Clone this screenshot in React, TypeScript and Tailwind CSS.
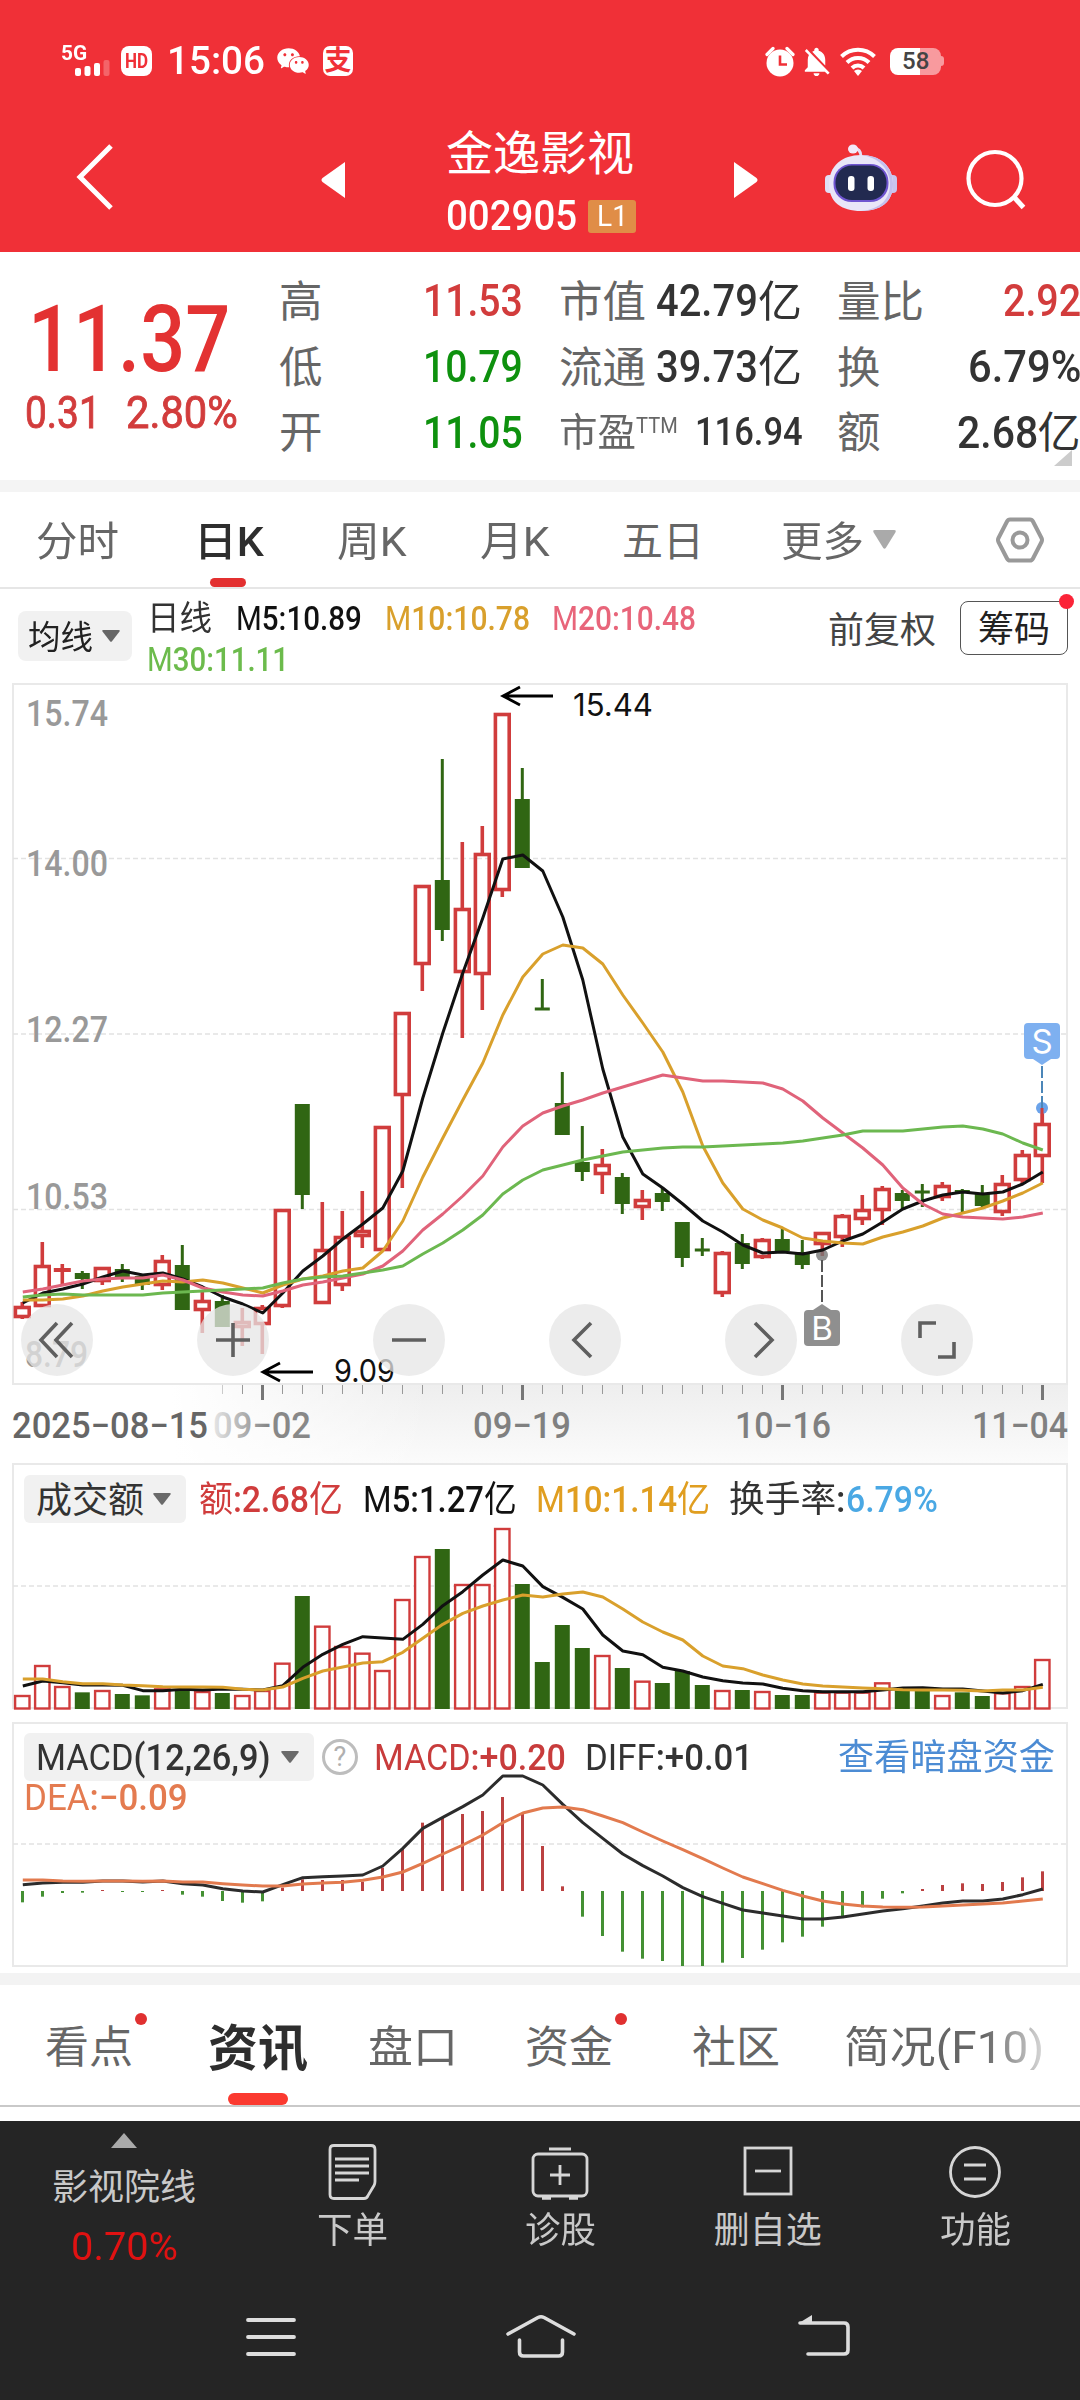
import { useLayoutEffect, useRef, useState, type ReactNode } from "react";
import { AiFillWechat } from "react-icons/ai";
import { MdNotificationsOff } from "react-icons/md";

const FONT = "Roboto, 'Noto Sans CJK SC', sans-serif";

/** One line of text, condensed or widened to fill the width of its box. */
function Fit({ className = "", children }: { className?: string; children: ReactNode }) {
  const box = useRef<HTMLSpanElement>(null);
  const text = useRef<HTMLSpanElement>(null);
  const [scale, setScale] = useState(1);
  useLayoutEffect(() => {
    if (box.current && text.current) setScale(box.current.clientWidth / text.current.offsetWidth);
  }, []);
  return (
    <span ref={box} className={`block shrink-0 whitespace-nowrap leading-none ${className}`}>
      <span ref={text} className="inline-block origin-left" style={{ transform: `scaleX(${scale})` }}>
        {children}
      </span>
    </span>
  );
}

/* ---------- chart data: one entry per trading day ---------- */

const STEP = 20;
const FIRST = 22.3;
const cx = (i: number) => FIRST + STEP * i;

// [rising, body top, body bottom, wick top, wick bottom]
type Candle = [number, number, number, number, number];
const candles: Candle[] = [
  [1, 1306, 1318, 1302, 1319], [1, 1265, 1307, 1242, 1307], [1, 1268.5, 1271.5, 1264, 1285], [0, 1273, 1279, 1271, 1289],
  [1, 1267, 1282, 1267, 1285], [0, 1269, 1279, 1264, 1282], [0, 1276, 1285, 1276, 1290], [1, 1260, 1286, 1255, 1290],
  [0, 1265, 1310, 1245, 1310], [1, 1300, 1311, 1290, 1333], [0, 1301, 1327, 1295, 1327], [1, 1321, 1328, 1308, 1346],
  [1, 1307, 1325, 1305, 1354], [1, 1209, 1307, 1209, 1308], [0, 1104, 1195, 1104, 1209], [1, 1249, 1304, 1202, 1304],
  [1, 1236, 1286, 1211, 1291], [1, 1230, 1237, 1191, 1248], [1, 1126, 1251, 1126, 1251], [1, 1012, 1096, 1012, 1188],
  [1, 885, 965, 885, 991], [0, 880, 930, 759, 941], [1, 908, 973, 842, 1038], [1, 853, 975, 826, 1010],
  [1, 713, 891, 713, 897], [0, 799, 868, 768, 868], [0, 1007.5, 1010.5, 979, 1010], [0, 1103, 1135, 1072, 1135],
  [0, 1162, 1172, 1126, 1181], [1, 1164, 1175, 1149, 1194], [0, 1177, 1204, 1173, 1214], [1, 1199, 1208, 1190, 1220],
  [0, 1193, 1202, 1188, 1211], [0, 1222, 1258, 1222, 1267], [0, 1248.5, 1251.5, 1238, 1256], [1, 1252, 1294, 1251, 1297],
  [0, 1243, 1264, 1234, 1269], [1, 1239, 1258, 1238, 1259], [0, 1239, 1251, 1227, 1251], [0, 1252, 1265, 1240, 1269],
  [1, 1232, 1245, 1232, 1256], [1, 1215, 1238, 1214, 1247], [1, 1209, 1220, 1195, 1225], [1, 1188, 1211, 1186, 1225],
  [0, 1193, 1201, 1190, 1209], [0, 1190.5, 1193.5, 1184, 1207], [1, 1185, 1198, 1182, 1201], [0, 1190, 1192.5, 1189, 1212],
  [0, 1194, 1206, 1185, 1208], [1, 1183, 1213, 1175, 1216], [1, 1154, 1181, 1150, 1184], [1, 1123, 1157, 1108, 1183],
];

const ma5 = [1303, 1293, 1289, 1284, 1277, 1271, 1275, 1273, 1279, 1287, 1297, 1304, 1313, 1293, 1271, 1256, 1239, 1224, 1208, 1171, 1098, 1033, 973, 918, 859, 855, 871, 917, 980, 1069, 1137, 1174, 1188, 1204, 1221, 1232, 1245, 1253, 1252, 1254, 1250, 1241, 1234, 1222, 1209, 1201, 1195, 1192, 1194, 1192, 1184, 1172];
const ma10 = [1300, 1300, 1299, 1296, 1291, 1287, 1284, 1281, 1282, 1280, 1283, 1288, 1293, 1285, 1279, 1276, 1271, 1268, 1251, 1221, 1177, 1138, 1100, 1063, 1015, 977, 954, 945, 948, 964, 995, 1023, 1052, 1092, 1146, 1183, 1209, 1220, 1228, 1238, 1241, 1243, 1244, 1237, 1232, 1226, 1218, 1213, 1208, 1201, 1193, 1183];
const ma20 = [1292, 1289, 1285, 1281, 1279, 1278, 1278, 1275, 1280, 1288, 1292, 1295, 1296, 1291, 1285, 1282, 1278, 1274, 1266, 1251, 1230, 1214, 1196, 1176, 1147, 1126, 1113, 1106, 1100, 1093, 1087, 1081, 1075, 1078, 1081, 1081, 1082, 1083, 1089, 1101, 1118, 1133, 1148, 1165, 1188, 1204, 1214, 1217, 1218, 1219, 1217, 1213];
const ma30 = [1297, 1295, 1294, 1295, 1295, 1295, 1295, 1293, 1292, 1291, 1290, 1289, 1288, 1283, 1279, 1277, 1276, 1273, 1270, 1266, 1254, 1243, 1230, 1215, 1194, 1180, 1170, 1165, 1160, 1156, 1152, 1150, 1148, 1147, 1147, 1146, 1145, 1144, 1143, 1141, 1138, 1135, 1131, 1131, 1131, 1129, 1127, 1126, 1129, 1134, 1143, 1150];

// Turnover panel, in thirds of a pixel from y = 1460
const volume = [705, 615, 678, 697, 690, 702, 706, 685, 690, 693, 699, 705, 690, 608, 408, 497, 558, 578, 630, 417, 288, 267, 372, 372, 204, 372, 606, 495, 564, 585, 624, 662, 669, 633, 675, 690, 690, 693, 705, 705, 695, 695, 695, 667, 690, 690, 705, 697, 708, 697, 678, 597];
const vol5 = [678, 663, 668, 675, 675, 676, 692, 692, 688, 690, 687, 688, 690, 677, 622, 583, 553, 530, 534, 538, 493, 437, 395, 345, 300, 318, 380, 412, 447, 525, 573, 584, 622, 633, 651, 662, 669, 672, 685, 692, 695, 695, 695, 690, 684, 683, 687, 687, 693, 699, 692, 673];
const vol10 = [657, 657, 665, 671, 671, 675, 677, 680, 681, 681, 682, 688, 690, 681, 655, 633, 621, 609, 605, 577, 535, 493, 460, 438, 420, 405, 411, 402, 396, 411, 447, 486, 516, 540, 588, 618, 626, 645, 660, 672, 678, 681, 684, 686, 689, 690, 690, 691, 693, 690, 690, 682];

// MACD panel, in thirds of a pixel from y = 1710; the zero line is at 543
const macd = [577, 560, 549, 548, 540, 546, 546, 540, 554, 560, 573, 578, 574, 533, 508, 510, 510, 515, 473, 417, 338, 322, 312, 303, 261, 312, 408, 529, 620, 678, 725, 746, 753, 768, 768, 758, 744, 719, 697, 680, 650, 618, 592, 566, 550, 537, 525, 520, 522, 516, 502, 484];
const diff = [524, 519, 517, 517, 513, 513, 516, 513, 521, 525, 536, 543, 546, 524, 503, 500, 498, 495, 468, 415, 355, 322, 290, 255, 198, 198, 225, 283, 338, 385, 432, 467, 498, 533, 560, 580, 600, 609, 618, 627, 627, 621, 612, 603, 596, 588, 579, 573, 573, 567, 554, 537];
const dea = [510, 510, 513, 514, 513, 513, 514, 513, 516, 516, 521, 525, 528, 528, 522, 519, 517, 511, 501, 486, 460, 432, 405, 375, 338, 309, 294, 291, 299, 318, 338, 366, 393, 419, 446, 474, 501, 521, 541, 558, 573, 582, 588, 591, 592, 591, 588, 585, 582, 579, 573, 567];

const RED = "#d03c3c";
const GREEN = "#306613";

const plain = (v: number) => v;
const volY = (v: number) => 1460 + v / 3;
const macdY = (v: number) => 1710 + v / 3;

function Line({ data, y, color }: { data: number[]; y: (v: number) => number; color: string }) {
  return (
    <polyline
      points={data.map((v, i) => `${cx(i) + 0.5},${y(v)}`).join(" ")}
      fill="none"
      stroke={color}
      strokeWidth={3}
      strokeLinejoin="round"
    />
  );
}

function Grid({ y }: { y: number }) {
  return <line x1={13} x2={1066} y1={y} y2={y} stroke="#e2e2e2" strokeWidth={1.4} strokeDasharray="5 3" />;
}

function SvgText({ x, y, w, size = 36, fill, weight = 500, children, family = FONT }: { x: number; y: number; w: number; size?: number; fill: string; weight?: number; children: string; family?: string }) {
  return (
    <text x={x} y={y} textLength={w} lengthAdjust="spacingAndGlyphs" fontSize={size} fill={fill} fontWeight={weight} fontFamily={family}>
      {children}
    </text>
  );
}

function Down({ className = "", color = "#666" }: { className?: string; color?: string }) {
  return (
    <svg viewBox="0 0 18 12" preserveAspectRatio="none" className={`shrink-0 ${className}`}>
      <path d="M1.5 0h15q2 0 1 1.500L10 11.300q-1 1-2 0L.5 1.500Q-.5 0 1.500 0z" fill={color} />
    </svg>
  );
}

/* ---------- header ---------- */

function StatusBar() {
  return (
    <div className="flex h-[122px] items-center text-white">
      <div className="relative ml-[61px] h-[34px] w-[50px]">
        <Fit className="-mt-[1px] w-[26px] text-[20px] font-bold">5G</Fit>
        <svg viewBox="0 0 50 34" className="absolute inset-0 h-[34px] w-[50px]" fill="#fff">
          <rect x="14" y="24" width="6" height="8" rx="2" />
          <rect x="23.500" y="22" width="6" height="10" rx="2" />
          <rect x="33" y="19" width="6" height="13" rx="2" />
          <rect x="42.500" y="16" width="6" height="16" rx="2" opacity=".25" />
        </svg>
      </div>
      <span className="ml-[10px] flex h-[30px] w-[31px] items-center justify-center rounded-[8px] bg-white">
        <Fit className="w-[23px] text-[20px] font-bold text-[#f03037]">HD</Fit>
      </span>
      <Fit className="ml-[15px] w-[98px] text-[39px] font-medium">15:06</Fit>
      <AiFillWechat className="ml-[10px] size-[36px]" />
      <span className="ml-[12px] flex size-[30px] items-center justify-center rounded-[7px] bg-white text-[27px] font-bold leading-none text-[#f03037]">支</span>
      <svg viewBox="0 0 30 31" className="ml-[412px] h-[31px] w-[30px]">
        <circle cx="15" cy="17" r="13.500" fill="#fff" />
        <path d="M2 8.500 8 2.500M28 8.500l-6-6" stroke="#fff" strokeWidth="3.200" strokeLinecap="round" />
        <path d="M15 9.500v9h7" stroke="#f03037" strokeWidth="2.600" fill="none" />
      </svg>
      <MdNotificationsOff className="ml-[4px] h-[37px] w-[35px]" />
      <svg viewBox="0 0 36 30" className="ml-[6px] h-[30px] w-[36px]" fill="none" stroke="#fff" strokeWidth="4">
        <path d="M1.500 10.500a23.500 23.500 0 0 1 33 0M7 16.500a15.500 15.500 0 0 1 22 0M12 22a8.500 8.500 0 0 1 12 0" />
        <path d="m14 25 4 5 4-5a5.800 5.800 0 0 0-8 0z" fill="#fff" stroke="none" />
      </svg>
      <span className="ml-[14px] flex h-[27px] w-[51px] items-center justify-center rounded-[8px] bg-linear-to-r from-white from-58% to-[#f89a9e] to-58%">
        <Fit className="w-[27px] text-[24px] font-medium text-[#444]">58</Fit>
      </span>
      <span className="h-[10px] w-[3px] rounded-r bg-[#f89a9e]" />
    </div>
  );
}

function Robot() {
  return (
    <svg viewBox="0 0 74 68" className="ml-[66px] h-[68px] w-[74px]">
      <path d="M37 13q0-9-8-9" stroke="#e6ddf5" strokeWidth="3" fill="none" />
      <ellipse cx="29" cy="5" rx="5" ry="4.500" fill="#f3e9fa" />
      <rect x="1" y="31" width="10" height="18" rx="4" fill="#e0dff6" />
      <rect x="63" y="31" width="10" height="18" rx="4" fill="#c9c5ee" />
      <path d="M37 11c19 0 32 11 32 29S57 67 37 67 5 58 5 40 18 11 37 11z" fill="#e9e6f8" />
      <path d="M37 11c19 0 32 11 32 29S57 67 37 67c20-2 29-12 29-27S54 13 37 11z" fill="#c4c0ee" />
      <rect x="9.500" y="20" width="55" height="38" rx="18" fill="#6f55d0" />
      <rect x="11.500" y="21.500" width="51" height="34.500" rx="16.500" fill="#222a50" />
      <rect x="24" y="32" width="6.500" height="15" rx="3" fill="#fff" />
      <rect x="43.500" y="32" width="6.500" height="15" rx="3" fill="#fff" />
    </svg>
  );
}

function TitleBar() {
  return (
    <div className="flex h-[130px] items-start text-white">
      <svg viewBox="0 0 38 66" className="ml-[76px] mt-[22px] h-[66px] w-[38px]" fill="none" stroke="#fff" strokeWidth="5">
        <path d="M35 2 4 33l31 31" />
      </svg>
      <svg viewBox="0 0 24 36" className="ml-[207px] mt-[40px] h-[36px] w-[24px]" fill="#fff">
        <path d="M24 0v36L1.500 20q-2-2 0-4z" />
      </svg>
      <div className="ml-[101px] flex w-[192px] flex-col">
        <Fit className="mt-[8px] w-[188px] text-[47px]">金逸影视</Fit>
        <div className="mt-[22px] flex h-[34px] items-center">
          <Fit className="w-[131px] text-[42px] font-medium">002905</Fit>
          <span className="ml-[11px] flex h-[33px] w-[48px] shrink-0 items-center justify-center rounded-[3px] bg-[#e08d47]">
            <Fit className="w-[31px] text-[29px]">L1</Fit>
          </span>
        </div>
      </div>
      <svg viewBox="0 0 24 36" className="ml-[96px] mt-[40px] h-[36px] w-[24px]" fill="#fff">
        <path d="M0 0v36l22.500-16q2-2 0-4z" />
      </svg>
      <div className="mt-[22px]">
        <Robot />
      </div>
      <svg viewBox="0 0 62 62" className="ml-[67px] mt-[27px] h-[62px] w-[62px]" fill="none" stroke="#fff" strokeWidth="4.200">
        <circle cx="30" cy="29.500" r="26.500" />
        <path d="m49 48 9.500 10.500" strokeWidth="5" />
      </svg>
    </div>
  );
}

/* ---------- quote ---------- */

function Label({ children }: { children: string }) {
  return <span className="pt-[4px] text-[43.500px] leading-none text-[#666]">{children}</span>;
}

function Quote() {
  return (
    <div className="relative flex h-[228px] pt-[16px] text-[45px] font-medium text-[#333]">
      <div className="w-[279px]">
        <Fit className="ml-[28px] mt-[25px] w-[202px] text-[93px] text-[#e33232]">11.37</Fit>
        <div className="mt-[4px] flex text-[#d23c3c]">
          <Fit className="ml-[25px] w-[76px] font-normal [-webkit-text-stroke:0.9px]">0.31</Fit>
          <Fit className="ml-[25px] w-[112px] font-normal [-webkit-text-stroke:0.9px]">2.80%</Fit>
        </div>
      </div>
      <div className="grid h-[197px] w-[244px] grid-rows-3 font-normal">
        <div className="flex items-center justify-between"><Label>高</Label><Fit className="w-[100px] font-medium text-[#d23c3c]">11.53</Fit></div>
        <div className="flex items-center justify-between"><Label>低</Label><Fit className="w-[100px] font-medium text-[#0e910e]">10.79</Fit></div>
        <div className="flex items-center justify-between"><Label>开</Label><Fit className="w-[100px] font-medium text-[#0e910e]">11.05</Fit></div>
      </div>
      <div className="ml-[36px] grid h-[197px] w-[242px] grid-rows-3 font-normal">
        {[["市值", "42.79"], ["流通", "39.73"]].map(([name, value]) => (
          <div key={name} className="flex items-center">
            <Label>{name}</Label>
            <Fit className="ml-[10px] w-[102px] font-medium">{value}</Fit>
            <Fit className="pt-[3px] w-[44px] text-[43px]">亿</Fit>
          </div>
        ))}
        <div className="flex items-center">
          <Fit className="w-[77px] pt-[3px] text-[39px] text-[#666]">市盈</Fit>
          <Fit className="mb-[13px] w-[42px] text-[22px] text-[#666]">TTM</Fit>
          <Fit className="ml-[17px] w-[108px] text-[38px] font-medium">116.94</Fit>
        </div>
      </div>
      <div className="ml-[36px] grid h-[197px] w-[243px] grid-rows-3 font-normal">
        <div className="flex items-center justify-between"><Label>量比</Label><Fit className="w-[78px] font-medium text-[#d23c3c]">2.92</Fit></div>
        <div className="flex items-center justify-between"><Label>换</Label><Fit className="w-[113px] font-medium">6.79%</Fit></div>
        <div className="flex items-center">
          <Label>额</Label>
          <Fit className="ml-[76px] w-[81px] font-medium">2.68</Fit>
          <Fit className="pt-[3px] w-[43px] text-[43px]">亿</Fit>
        </div>
      </div>
      <svg viewBox="0 0 18 16" className="absolute left-[1054px] top-[198px] h-[16px] w-[18px]"><path d="M18 0v16H0z" fill="#ccc" /></svg>
    </div>
  );
}

/* ---------- chart period tabs ---------- */

function PeriodTabs() {
  return (
    <div className="flex h-[97px] items-center border-b-[2px] border-[#e6e6e6] text-[41px] text-[#666]">
      <Fit className="ml-[36px] w-[83px] pt-[5px]">分时</Fit>
      <div className="relative ml-[75px] flex h-full items-center">
        <Fit className="w-[70px] pt-[5px] font-medium text-[#2e2e2e]">日K</Fit>
        <span className="absolute bottom-0 left-[16px] h-[9px] w-[36px] rounded-full bg-[#e33030]" />
      </div>
      <Fit className="ml-[73px] w-[70px] pt-[5px]">周K</Fit>
      <Fit className="ml-[73px] w-[70px] pt-[5px]">月K</Fit>
      <Fit className="ml-[72px] w-[82px] pt-[5px]">五日</Fit>
      <Fit className="ml-[77px] w-[83px] pt-[5px]">更多</Fit>
      <Down className="ml-[9px] h-[19px] w-[23px]" color="#aaa" />
      <svg viewBox="0 0 48 46" className="ml-[100px] h-[46px] w-[48px]" fill="none" stroke="#999" strokeWidth="4">
        <path d="M14 2.500h20q2 0 3 2l8.500 16.500q1 2 0 4L37 41.500q-1 2-3 2H14q-2 0-3-2L2.500 25q-1-2 0-4L11 4.500q1-2 3-2z" />
        <circle cx="24" cy="23" r="7.500" />
      </svg>
    </div>
  );
}

function MaRow() {
  return (
    <div className="relative flex h-[94px] text-[34px]">
      <div className="ml-[18px] mt-[22px] flex h-[50px] w-[114px] items-center rounded-[8px] bg-[#f1f1f1] text-[#222]">
        <Fit className="ml-[10px] w-[65px] pt-[3px] text-[33px]">均线</Fit>
        <Down className="ml-[9px] h-[12px] w-[18px]" color="#666" />
      </div>
      <div className="ml-[15px] w-[670px] pt-[12px] font-medium">
        <div className="flex">
          <Fit className="w-[65px] font-normal text-[#333]">日线</Fit>
          <Fit className="ml-[24px] w-[126px] text-[#111]"><span className="font-normal">M</span>5:10.89</Fit>
          <Fit className="ml-[23px] w-[145px] text-[#d9a02c]"><span className="font-normal">M</span>10:10.78</Fit>
          <Fit className="ml-[22px] w-[144px] text-[#e8657a]"><span className="font-normal">M</span>20:10.48</Fit>
        </div>
        <Fit className="mt-[7px] w-[142px] text-[#6cbb4c]"><span className="font-normal">M</span>30:11.11</Fit>
      </div>
      <Fit className="ml-[11px] mt-[24px] w-[108px] text-[36px] text-[#444]">前复权</Fit>
      <div className="relative ml-[24px] mt-[12px] flex h-[54px] w-[108px] items-center justify-center rounded-[8px] border-[1.500px] border-[#555] text-[#222]">
        <Fit className="w-[72px] pt-[3px] text-[36px]">筹码</Fit>
        <span className="absolute -right-[7px] -top-[8px] size-[15px] rounded-full bg-[#fb2438]" />
      </div>
    </div>
  );
}

/* ---------- price chart ---------- */

function Marker({ x, top, color, label, up }: { x: number; top: number; color: string; label: string; up?: boolean }) {
  return (
    <g>
      <rect x={x - 18} y={top} width={36} height={36} rx={4} fill={color} />
      <path d={up ? `M${x - 9} ${top}l9 -6 9 6z` : `M${x - 9} ${top + 36}l9 6 9 -6z`} fill={color} />
      <text x={x} y={top + 30} fontSize={33} fill="#fff" textAnchor="middle" fontFamily="Inter, sans-serif">{label}</text>
    </g>
  );
}

function PriceChart() {
  const buttons = [
    <path key="a" d="M0 -17-16 0 0 17M15 -17-1 0 15 17" />,
    <path key="b" d="M-17 0H17M0 -17V17" />,
    <path key="c" d="M-17 0H17" />,
    <path key="d" d="M6 -17-11 0 6 17" />,
    <path key="e" d="M-6 -17 11 0-6 17" />,
    <path key="f" d="M-17 -2V-17H-1M17 2V17H1" />,
  ];
  return (
    <div className="relative h-[702px]">
      <svg viewBox="0 683 1080 702" className="block h-[702px] w-full">
        <rect x={13} y={684} width={1054} height={700} fill="none" stroke="#e9e9e9" strokeWidth={2} />
        <Grid y={858.500} />
        <Grid y={1034} />
        <Grid y={1209.500} />
        <SvgText x={26} y={726} w={82} fill="#999">15.74</SvgText>
        <SvgText x={26} y={876} w={82} fill="#999">14.00</SvgText>
        <SvgText x={26} y={1042} w={82} fill="#999">12.27</SvgText>
        <SvgText x={26} y={1209} w={82} fill="#999">10.53</SvgText>
        <SvgText x={25} y={1367} w={63} fill="#999">8.79</SvgText>
        {candles.map(([rise, top, bottom, high, low], i) => {
          const x = cx(i);
          return rise ? (
            <g key={i} stroke={RED} strokeWidth={3.600} fill="none">
              <path d={`M${x} ${high}V${top}M${x} ${bottom}V${low}`} />
              {bottom - top < 4 ? <path d={`M${x - 8.500} ${(top + bottom) / 2}h17`} strokeWidth={4} /> : <rect x={x - 6.900} y={top + 1.500} width={13.800} height={bottom - top - 3} />}
            </g>
          ) : (
            <g key={i} fill={GREEN}>
              <rect x={x - 1.500} y={high} width={3} height={low - high} />
              <rect x={x - 7.500} y={top} width={15} height={bottom - top} />
            </g>
          );
        })}
        <circle cx={822} cy={1255} r={6} fill="#777" opacity={0.8} />
        <circle cx={1042} cy={1108} r={6} fill="#6ba3ea" />
        <path d="M1042 1108V1123" stroke={RED} strokeWidth={3} />
        <Line data={ma5} y={plain} color="#111" />
        <Line data={ma10} y={plain} color="#d9a02c" />
        <Line data={ma20} y={plain} color="#e0637a" />
        <Line data={ma30} y={plain} color="#6cb850" />
        <path d="M822 1260V1304" stroke="#555" strokeWidth={2} strokeDasharray="12 3" />
        <path d="M1042 1066V1108" stroke="#4b86b8" strokeWidth={2} strokeDasharray="12 3" />
        <Marker x={822} top={1310} color="#8f8f8f" label="B" up />
        <Marker x={1042} top={1023} color="#7eb0f0" label="S" />
        <path d="M553 696H503M520 687l-17 9 17 9M313 1372H263M280 1363l-17 9 17 9" fill="none" stroke="#000" strokeWidth={2.800} />
        <SvgText x={573} y={716} w={80} size={31} fill="#111" weight={400} family="Inter, sans-serif">15.44</SvgText>
        <SvgText x={334} y={1382} w={61} size={31} fill="#111" weight={400} family="Inter, sans-serif">9.09</SvgText>
      </svg>
      <div className="absolute left-[21px] top-[621px] flex gap-[104px]">
        {buttons.map((icon, i) => (
          <button key={i} className="flex size-[72px] items-center justify-center rounded-full bg-[#e6e6e6]/75">
            <svg viewBox="-20 -20 40 40" className="size-[40px]" fill="none" stroke="#5f5f5f" strokeWidth={3.600}>{icon}</svg>
          </button>
        ))}
      </div>
    </div>
  );
}

function DateAxis() {
  return (
    <div className="relative h-[78px] px-[12px]">
      <div className="h-full bg-linear-to-b from-[#eeeeee] to-[#fbfbfb]" />
      <div className="absolute inset-y-0 left-0 w-[430px] bg-linear-to-r from-white from-40% to-white/0" />
      <svg viewBox="0 1385 1080 78" className="absolute inset-0 h-[78px] w-full">
        <defs>
          <linearGradient id="fade" x1="0" x2="1">
            <stop offset="0" stopColor="#888" stopOpacity=".2" />
            <stop offset=".55" stopColor="#888" />
          </linearGradient>
        </defs>
        {candles.map((_, i) => {
          if (i < 10) return null;
          const major = (i - 12) % 13 === 0;
          return <rect key={i} x={cx(i) - (major ? 1.300 : 0.300)} y={1385} width={major ? 3 : 1} height={major ? 15 : 9} fill={major ? "#777" : "#999"} opacity={i === 10 ? 0.5 : 1} />;
        })}
        <SvgText x={12} y={1438} w={196} fill="#666">2025−08−15</SvgText>
        <SvgText x={213} y={1438} w={98} fill="url(#fade)">09−02</SvgText>
        <SvgText x={473} y={1438} w={98} fill="#808080">09−19</SvgText>
        <SvgText x={735} y={1438} w={96} fill="#808080">10−16</SvgText>
        <SvgText x={972} y={1438} w={96} fill="#808080">11−04</SvgText>
      </svg>
    </div>
  );
}

/* ---------- indicator panels ---------- */

function VolumePanel() {
  return (
    <div className="relative h-[259px]">
      <svg viewBox="0 1463 1080 259" className="absolute inset-0 h-[259px] w-full">
        <rect x={13} y={1464} width={1054} height={244} fill="none" stroke="#e9e9e9" strokeWidth={2} />
        <Grid y={1586} />
        {volume.map((v, i) => {
          const top = volY(v);
          return candles[i][0] ? (
            <rect key={i} x={cx(i) - 7.200} y={top + 1} width={14.400} height={1708.500 - top - 1} fill="#fff" stroke={RED} strokeWidth={2.400} />
          ) : (
            <rect key={i} x={cx(i) - 7.500} y={top} width={15} height={1709 - top} fill={GREEN} />
          );
        })}
        <Line data={vol5} y={volY} color="#111" />
        <Line data={vol10} y={volY} color="#d9a02c" />
      </svg>
      <div className="relative flex h-[48px] translate-y-[12px] items-center text-[36px] font-medium">
        <div className="ml-[24px] flex h-[48px] w-[162px] items-center rounded-[6px] bg-[#f1f1f1] text-[#333]">
          <Fit className="ml-[12px] w-[108px] pt-[3px] font-normal">成交额</Fit>
          <Down className="ml-[9px] h-[12px] w-[18px]" color="#6a6a6a" />
        </div>
        <Fit className="ml-[13px] w-[144px] pt-[2px] text-[#d03c3c]"><span className="font-normal">额</span>:2.68<span className="font-normal">亿</span></Fit>
        <Fit className="ml-[20px] w-[154px] pt-[2px] text-[#111]"><span className="font-normal">M</span>5:1.27<span className="font-normal">亿</span></Fit>
        <Fit className="ml-[19px] w-[174px] pt-[2px] text-[#e09e20]"><span className="font-normal">M</span>10:1.14<span className="font-normal">亿</span></Fit>
        <Fit className="ml-[19px] w-[117px] pt-[2px] text-[#333]"><span className="font-normal">换手率</span>:</Fit>
        <Fit className="w-[92px] pt-[2px] text-[#4aa8e4]">6.79%</Fit>
      </div>
    </div>
  );
}

function MacdPanel() {
  return (
    <div className="relative h-[251px]">
      <svg viewBox="0 1722 1080 251" className="absolute inset-0 h-[251px] w-full">
        <rect x={13} y={1723} width={1054} height={243} fill="none" stroke="#e9e9e9" strokeWidth={2} />
        <Grid y={1844} />
        {macd.map((v, i) => (
          <rect key={i} x={cx(i) - 1.300} y={Math.min(macdY(v), 1891)} width={3} height={Math.abs(macdY(v) - 1891)} fill={v < 543 ? "#bb4141" : "#449033"} />
        ))}
        <Line data={diff} y={macdY} color="#2c2c2c" />
        <Line data={dea} y={macdY} color="#e27a4e" />
      </svg>
      <div className="relative flex h-[48px] translate-y-[11px] items-center text-[36px] font-medium">
        <div className="ml-[24px] flex h-[48px] w-[290px] items-center rounded-[6px] bg-[#f1f1f1] text-[#333]">
          <Fit className="ml-[12px] w-[235px] pt-[2px]"><span className="font-normal">MACD</span>(12,26,9)</Fit>
          <Down className="ml-[10px] h-[12px] w-[18px]" color="#6a6a6a" />
        </div>
        <span className="ml-[8px] flex size-[36px] items-center justify-center rounded-full border-[3px] border-[#bdbdbd] text-[27px] font-normal leading-none text-[#b0b0b0]">?</span>
        <Fit className="ml-[16px] w-[192px] pt-[2px] text-[#c83c3c]"><span className="font-normal">MACD</span>:+0.20</Fit>
        <Fit className="ml-[19px] w-[168px] pt-[2px] text-[#333]"><span className="font-normal">DIFF</span>:+0.01</Fit>
        <Fit className="ml-[85px] w-[217px] pt-[2px] font-normal text-[#4c8cd4]">查看暗盘资金</Fit>
      </div>
      <Fit className="relative ml-[24px] mt-[10px] w-[164px] text-[36px] font-medium text-[#e47b50]"><span className="font-normal">DEA</span>:−0.09</Fit>
    </div>
  );
}

/* ---------- bottom ---------- */

function Dot() {
  return <span className="absolute -right-[14px] -top-[13px] size-[12px] rounded-full bg-[#e03030]" />;
}

function InfoTabs() {
  return (
    <div className="flex h-[122px] items-center border-b-[2px] border-[#c9c9c9] text-[44px] text-[#666]">
      <div className="relative mt-[6px] ml-[45px]"><Fit className="w-[88px]">看点</Fit><Dot /></div>
      <div className="relative ml-[75px] flex h-full items-center text-[#2e2e2e]">
        <Fit className="mt-[7px] w-[100px] text-[50px] font-bold">资讯</Fit>
        <span className="absolute bottom-0 left-[20px] h-[12px] w-[60px] rounded-full bg-[#fb3a30]" />
      </div>
      <Fit className="mt-[6px] ml-[60px] w-[90px]">盘口</Fit>
      <div className="relative mt-[6px] ml-[67px]"><Fit className="w-[88px]">资金</Fit><Dot /></div>
      <Fit className="mt-[6px] ml-[79px] w-[88px]">社区</Fit>
      <Fit className="mt-[6px] ml-[64px] w-[200px] mask-r-from-70% mask-r-to-110%">简况(F10)</Fit>
    </div>
  );
}

function Action({ label, className, children }: { label: string; className: string; children: ReactNode }) {
  return (
    <div className="flex w-[207.500px] flex-col items-center">
      <svg viewBox="0 0 60 60" className="h-[60px] w-[60px]" fill="none" stroke="#d6d6d6" strokeWidth="2.800">{children}</svg>
      <Fit className={`mt-[12px] text-[36px] ${className}`}>{label}</Fit>
    </div>
  );
}

function ActionBar() {
  return (
    <div className="flex h-[169px] text-[#c9c9c9]">
      <div className="flex w-[248px] flex-col items-center pt-[12px]">
        <svg viewBox="0 0 26 15" className="h-[15px] w-[26px]"><path d="M13 0 26 15H0z" fill="#aaa" /></svg>
        <Fit className="mt-[22px] w-[144px] text-[36px]">影视院线</Fit>
        <Fit className="mt-[22px] w-[107px] text-[38px] text-[#e01212]">0.70%</Fit>
      </div>
      <div className="flex pt-[20px] pl-[1px]">
        <Action label="下单" className="w-[71px]">
          <path d="M11 4.500h37q4 0 4 4v32q0 2-1 4l-6 10q-1 3-4 3H11q-4 0-4-4v-45q0-4 4-4z" />
          <path d="M12 18h34M12 25h34M12 32h34M12 39h24" />
        </Action>
        <Action label="诊股" className="w-[71px]">
          <rect x="3" y="13" width="54" height="42" rx="5" />
          <path d="M19 8h22M30 24v20M20 34h20" />
          <path d="M12 57h9M39 57h9" strokeWidth="3.500" />
        </Action>
        <Action label="删自选" className="w-[108px]">
          <rect x="7" y="7" width="46" height="46" />
          <path d="M17 30h26" />
        </Action>
        <Action label="功能" className="w-[71px]">
          <circle cx="30" cy="31" r="24.500" />
          <path d="M19 24h22M19 38h22" />
        </Action>
      </div>
    </div>
  );
}

function NavBar() {
  return (
    <div className="flex h-[110px] items-start pt-[22px]">
      <svg viewBox="0 0 54 48" className="ml-[244px] h-[48px] w-[54px]" stroke="#ddd" strokeWidth="3.800" strokeLinecap="round">
        <path d="M4 8h46M4 25h46M4 42h46" />
      </svg>
      <svg viewBox="0 0 74 48" className="ml-[206px] h-[48px] w-[74px]" fill="none" stroke="#ddd" strokeWidth="3.600" strokeLinecap="round" strokeLinejoin="round">
        <path d="m4 22 30-16.500q3-1.500 6 0L70 22M15.500 28v12q0 4 4 4h35q4 0 4-4V28" />
      </svg>
      <svg viewBox="0 0 56 48" className="ml-[218px] h-[48px] w-[56px]" fill="none" stroke="#ddd" strokeWidth="3.600" strokeLinecap="round">
        <path d="M4 11h44q4 0 4 4v23q0 4-4 4H12" />
        <path d="M16 3v8H3z" fill="#ddd" stroke="none" />
      </svg>
    </div>
  );
}

export default function App() {
  return (
    <div className="h-[2400px] w-[1080px] overflow-hidden bg-white font-[Roboto,'Noto_Sans_CJK_SC',sans-serif]">
      <header className="bg-[#f03037]">
        <StatusBar />
        <TitleBar />
      </header>
      <Quote />
      <div className="h-[12px] bg-[#f4f4f4]" />
      <PeriodTabs />
      <MaRow />
      <PriceChart />
      <DateAxis />
      <VolumePanel />
      <MacdPanel />
      <div className="h-[12px] bg-[#f3f3f3]" />
      <InfoTabs />
      <footer className="mt-[14px] bg-[#252525]">
        <ActionBar />
        <NavBar />
      </footer>
    </div>
  );
}
